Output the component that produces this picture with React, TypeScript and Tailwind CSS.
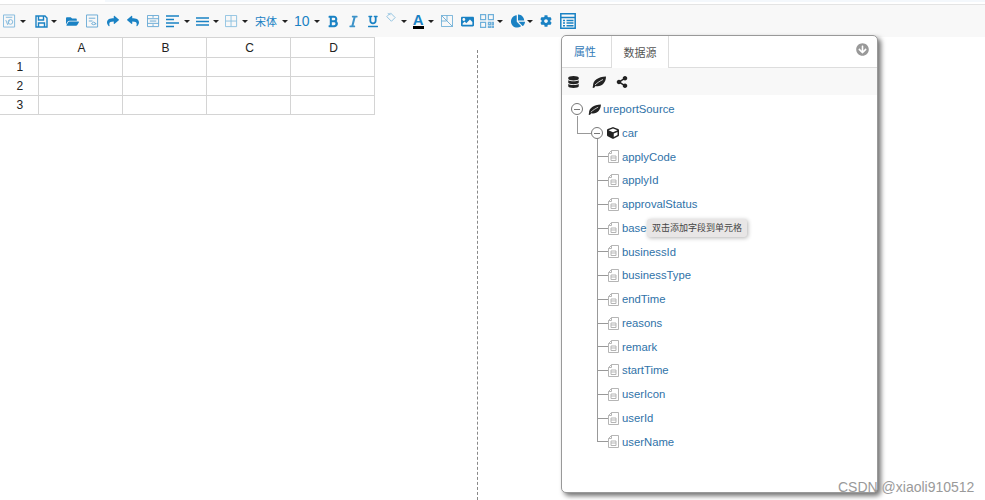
import React from 'react';
import {
  FaBold, FaItalic, FaUnderline, FaFolderOpen, FaShare, FaReply, FaCog, FaDatabase,
  FaShareAlt, FaCube, FaChartPie, FaArrowCircleDown, FaImage,
} from 'react-icons/fa';

const Caret = ({ className = '' }: { className?: string }) => (
  <span className={`inline-block w-0 h-0 border-x-[3px] border-x-transparent border-t-[3px] border-t-[#222] ${className}`} />
);

const Sheet = ({ className = '', children }: { className?: string; children: React.ReactNode }) => (
  <svg viewBox="0 0 14 14" fill="none" stroke="currentColor" strokeWidth="1" className={className}>
    {children}
  </svg>
);

const Leaf = ({ className = '' }: { className?: string }) => (
  <svg viewBox="0 0 14 12" className={className}>
    <path d="M1 10C1 4 6 1 14 0.5 14 7 9 11.5 3.5 10 L2 12 L0.5 11.5z" fill="#222" />
    <path d="M3 9C5.5 6.5 8 5 11 3.5" fill="none" stroke="#f8f8f8" strokeWidth="0.8" />
  </svg>
);

const FieldIcon = () => (
  <svg viewBox="0 0 11 13" fill="none" stroke="#b5b5b5" strokeWidth="1" className="w-[11px] h-[13px] shrink-0">
    <path d="M3.5 .5h7v12h-10v-9z" />
    <path d="M3.5 .5v3h-3M3 6h5v4.5h-5zM3 8h5" />
  </svg>
);

const columns = ['A', 'B', 'C', 'D'];
const rows = ['1', '2', '3'];
const fields = [
  'applyCode', 'applyId', 'approvalStatus', 'baseI', 'businessId', 'businessType', 'endTime',
  'reasons', 'remark', 'startTime', 'userIcon', 'userId', 'userName',
];

const Toolbar = () => (
  <div className="h-[32px] bg-[#f8f8f8] flex items-center pl-[3px] text-[#1a82c4]">
    <Sheet className="w-[13px] h-[14px] text-[#7fb8dc]">
      <path d="M.5 .5h12v13h-12zM3 3h7M3 6l2 5 2-5" />
      <circle cx="8" cy="8" r="2.5" />
    </Sheet>
    <Caret className="ml-[4px]" />
    <svg viewBox="0 0 13 13" fill="none" stroke="#1a82c4" strokeWidth="1.4" className="w-[13px] h-[13px] ml-[9px]">
      <path d="M1 1h9l2 2v9h-11zM3.5 1v4h5v-4M3.5 12v-4h6v4" />
    </svg>
    <Caret className="ml-[3px]" />
    <FaFolderOpen className="w-[13px] h-[13px] ml-[9px]" />
    <Sheet className="w-[13px] h-[14px] ml-[7px] text-[#64a8d4]">
      <path d="M.5 .5h12v13h-12zM3 4h7M3 7h4M6 10l2-2 3 2-3 1z" />
    </Sheet>
    <FaShare className="w-[12px] h-[12px] ml-[8px]" />
    <FaReply className="w-[12px] h-[12px] ml-[8px]" />
    <Sheet className="w-[13px] h-[13px] ml-[8px] text-[#64a8d4]">
      <path d="M.5 .5h12v12h-12zM.5 4h12M.5 9h12M3 6.5h7M6.5 1v2M6.5 10v2" />
    </Sheet>
    <svg viewBox="0 0 13 13" stroke="#1a82c4" strokeWidth="1.5" className="w-[13px] h-[13px] ml-[6px]">
      <path d="M0 1h13M0 4.5h8M0 8h13M0 11.5h8" />
    </svg>
    <Caret className="ml-[5px]" />
    <svg viewBox="0 0 13 13" stroke="#1a82c4" strokeWidth="1.5" className="w-[13px] h-[13px] ml-[6px]">
      <path d="M0 3h13M0 6.5h13M0 10h13" />
    </svg>
    <Caret className="ml-[4px]" />
    <Sheet className="w-[13px] h-[13px] ml-[6px] text-[#8cc0e0]">
      <path d="M.5 .5h12v12h-12zM.5 6.5h12M6.5 .5v12" />
    </Sheet>
    <Caret className="ml-[4px]" />
    <span className="ml-[7px] text-[11px] leading-none font-['Noto_Sans_CJK_SC',sans-serif]">宋体</span>
    <Caret className="ml-[5px]" />
    <span className="ml-[6px] text-[14px] leading-none">10</span>
    <Caret className="ml-[4px]" />
    <FaBold className="w-[10px] h-[13px] ml-[8px]" />
    <FaItalic className="w-[9px] h-[13px] ml-[11px] text-[#3d93c9]" />
    <FaUnderline className="w-[10px] h-[13px] ml-[10px]" />
    <Sheet className="w-[13px] h-[13px] ml-[6px] mb-[5px] text-[#8cc0e0]">
      <path d="M3 5l4-4 5 5-4 4zM4 1.5l3 1.5" />
    </Sheet>
    <Caret className="ml-[4px]" />
    <span className="ml-[6px] flex flex-col items-center w-[11px] leading-none">
      <span className="text-[15px] font-bold leading-[13px]">A</span>
      <span className="w-[11px] h-[3px] bg-black" />
    </span>
    <Caret className="ml-[4px]" />
    <Sheet className="w-[12px] h-[12px] ml-[7px] text-[#64a8d4]">
      <path d="M.5 .5h13v13h-13zM.5 .5l13 13M7 .5v6M.5 7h6" />
    </Sheet>
    <FaImage className="w-[13px] h-[13px] ml-[8px]" />
    <svg viewBox="0 0 14 14" fill="none" stroke="#6fb0da" strokeWidth="1.2" className="w-[14px] h-[14px] ml-[6px]">
      <path d="M.6 .6h5v5h-5zM8.4 .6h5v5h-5zM.6 8.4h5v5h-5zM8.4 8.4h2v2h-2zM12 8.4h1.4v2h-1.4zM8.4 12h2v1.4h-2zM12 12h1.4v1.4h-1.4z" />
    </svg>
    <Caret className="ml-[3px]" />
    <FaChartPie className="w-[14px] h-[14px] ml-[8px]" />
    <Caret className="ml-[2px]" />
    <FaCog className="w-[12px] h-[12px] ml-[7px]" />
    <svg viewBox="0 0 16 16" fill="none" stroke="#1a82c4" strokeWidth="1.5" className="w-[16px] h-[16px] ml-[8px]">
      <path d="M.8 .8h14.4v14.4h-14.4zM.8 4.5h14.4M3 7.5h2M6.5 7.5h7M3 10h2M6.5 10h7M3 12.7h2M6.5 12.7h7" />
    </svg>
  </div>
);

const SheetGrid = () => (
  <table className="w-[374px] table-fixed border-collapse text-[12px] text-[#222] shrink-0 self-start">
    <colgroup>
      <col className="w-[38px]" />
      <col className="w-[84px]" />
      <col className="w-[84px]" />
      <col className="w-[84px]" />
      <col className="w-[84px]" />
    </colgroup>
    <tbody>
      <tr className="h-[20px]">
        <td className="border-y border-r border-[#d4d4d4]" />
        {columns.map(c => (
          <td key={c} className="border border-[#d4d4d4] text-center pl-[3px]">{c}</td>
        ))}
      </tr>
      {rows.map(r => (
        <tr key={r} className="h-[19px]">
          <td className="border-y border-r border-[#d4d4d4] text-center pl-[2px]">{r}</td>
          {columns.map(c => (
            <td key={c} className="border border-[#d4d4d4]" />
          ))}
        </tr>
      ))}
    </tbody>
  </table>
);

const MinusCircle = () => (
  <span className="w-[12px] h-[12px] rounded-full border border-[#777] bg-white flex items-center justify-center shrink-0 relative z-10">
    <span className="w-[6px] h-px bg-[#777]" />
  </span>
);

const Panel = () => (
  <div className="absolute left-[561px] top-[35px] w-[317px] h-[458px] bg-white border border-[#999] rounded-[5px] shadow-[3px_3px_5px_rgba(0,0,0,0.55)]">
    <div className="h-[32px] flex border-b border-[#ddd] relative text-[11px] font-['Noto_Sans_CJK_SC',sans-serif]">
      <span className="w-[49px] flex items-center pl-[12px] text-[#337ab7]">属性</span>
      <span className="w-[58px] h-[32px] flex items-center justify-center text-[#555] border-x border-[#ddd] bg-white">数据源</span>
      <FaArrowCircleDown className="absolute right-[8px] top-[7px] w-[13px] h-[13px] text-[#999]" />
    </div>
    <div className="h-[27px] bg-[#f8f8f8] flex items-center text-[#222] pl-[6px]">
      <FaDatabase className="w-[11px] h-[12px]" />
      <Leaf className="w-[14px] h-[12px] ml-[13px]" />
      <FaShareAlt className="w-[12px] h-[12px] ml-[10px]" />
    </div>
    <div className="pt-[2.6px] text-[11.3px] text-[#2f72a8]">
      <div className="h-[23.75px] flex items-center pl-[9px] relative">
        <MinusCircle />
        <Leaf className="w-[13px] h-[11px] ml-[5px]" />
        <span className="ml-[2px]">ureportSource</span>
        <span className="absolute left-[15px] top-[18px] h-[18px] w-px bg-[#999]" />
      </div>
      <div className="h-[23.75px] flex items-center pl-[29px] relative">
        <span className="absolute left-[15px] top-1/2 w-[14px] h-px bg-[#999]" />
        <MinusCircle />
        <FaCube className="w-[12px] h-[12px] ml-[4px] text-[#222]" />
        <span className="ml-[3px]">car</span>
      </div>
      <div className="relative">
        <span className="absolute left-[35px] -top-[6px] bottom-[12px] w-px bg-[#999]" />
        {fields.map(f => (
          <div key={f} className="h-[23.75px] flex items-center pl-[35px]">
            <span className="w-[11px] h-px bg-[#999] shrink-0" />
            <FieldIcon />
            <span className="ml-[3px]">{f}</span>
          </div>
        ))}
      </div>
    </div>
    <div className="absolute left-[85px] top-[183px] h-[18px] px-[5px] flex items-center rounded-[3px] bg-[#e8e6e6] shadow-[1px_1px_4px_rgba(0,0,0,0.3)] text-[9px] text-[#444] font-['Noto_Sans_CJK_SC',sans-serif] whitespace-nowrap">
      双击添加字段到单元格
    </div>
  </div>
);

export default function App() {
  return (
    <div className="relative w-[985px] h-[500px] overflow-hidden bg-white font-['Liberation_Sans',sans-serif]">
      <div className="h-[5px] border-b border-[#e4e4e4]">
        <div className="ml-[105px] h-[2px] bg-[#f4f8fc]" />
      </div>
      <Toolbar />
      <div className="flex">
        <SheetGrid />
        <div className="ml-[102px] mt-[13px] h-[450px] border-l border-dashed border-[#888]" />
      </div>
      <Panel />
      <div className="absolute left-[838px] top-[480px] text-[14px] leading-none text-[#9a9a9a] whitespace-nowrap">
        CSDN @xiaoli910512
      </div>
    </div>
  );
}
